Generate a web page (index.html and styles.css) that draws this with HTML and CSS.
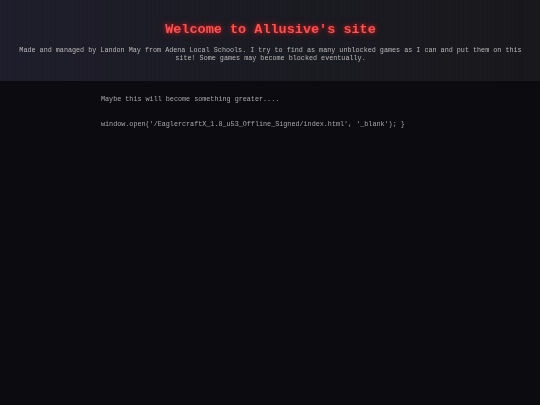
FILE: index.html
```html
<!DOCTYPE html>
<html lang="en">
<head>
<meta charset="utf-8">
<title>Allusive's site</title>
<link rel="stylesheet" href="styles.css">
</head>
<body>
<header class="site-header">
  <h1 class="title">Welcome to Allusive's site</h1>
  <p class="subtitle">Made and managed by Landon May from Adena Local Schools. I try to find as many unblocked games as I can and put them on this site! Some games may become blocked eventually.</p>
</header>
<main class="content">
  <p class="line">Maybe this will become something greater....</p>
  <p class="line code">window.open('/EaglercraftX_1.8_u53_Offline_Signed/index.html', '_blank'); }</p>
</main>
</body>
</html>
```
FILE: styles.css
```css
html, body {
  margin: 0;
  padding: 0;
  height: 100%;
}
body {
  background: #0c0b10;
  font-family: "Liberation Mono", "Courier New", monospace;
  color: #a8a8a8;
  -webkit-font-smoothing: antialiased;
}
.site-header {
  padding: 21px 13.5px 19px;
  text-align: center;
  background:
    repeating-linear-gradient(90deg, rgba(255,255,255,0.006) 0 1px, rgba(0,0,0,0) 1px 4px),
    linear-gradient(90deg, #1e1d2b 0%, #1b1b23 45%, #18181c 100%);
}
.title {
  margin: 0;
  font-size: 13.5px;
  line-height: 18px;
  font-weight: bold;
  color: #ff5050;
  text-shadow: 0 0 4px rgba(255, 40, 40, 0.7), 0 0 8px rgba(255, 0, 0, 0.4);
  will-change: transform;
}
.subtitle {
  margin: 7px 0 0;
  font-size: 6.75px;
  line-height: 8px;
  color: #b8b8b8;
  will-change: transform;
}
.content {
  padding: 14px 0 0 101px;
  will-change: transform;
}
.line {
  margin: 0 0 17px;
  font-size: 6.75px;
  line-height: 8px;
  color: #a8a8a8;
}
```
